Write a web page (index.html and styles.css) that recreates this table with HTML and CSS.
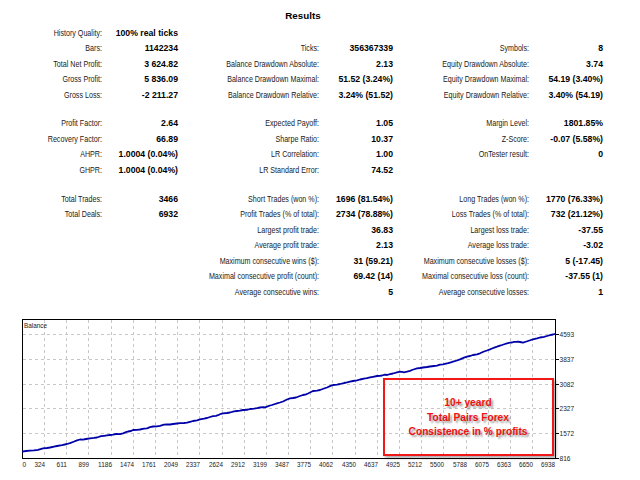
FILE: index.html
```html
<!DOCTYPE html>
<html>
<head>
<meta charset="utf-8">
<title>Results</title>
<link rel="stylesheet" href="styles.css">
</head>
<body>
<div class="report">
  <div class="title">Results</div>
  <div class="stats">
    <div class="l">History Quality:</div><div class="v">100% real ticks</div><div class="l"></div><div class="v"></div><div class="l"></div><div class="v"></div>
    <div class="l">Bars:</div><div class="v">1142234</div><div class="l">Ticks:</div><div class="v">356367339</div><div class="l">Symbols:</div><div class="v">8</div>
    <div class="l">Total Net Profit:</div><div class="v">3 624.82</div><div class="l">Balance Drawdown Absolute:</div><div class="v">2.13</div><div class="l">Equity Drawdown Absolute:</div><div class="v">3.74</div>
    <div class="l">Gross Profit:</div><div class="v">5 836.09</div><div class="l">Balance Drawdown Maximal:</div><div class="v">51.52 (3.24%)</div><div class="l">Equity Drawdown Maximal:</div><div class="v">54.19 (3.40%)</div>
    <div class="l">Gross Loss:</div><div class="v">-2 211.27</div><div class="l">Balance Drawdown Relative:</div><div class="v">3.24% (51.52)</div><div class="l">Equity Drawdown Relative:</div><div class="v">3.40% (54.19)</div>
    <div class="sp"></div>
    <div class="l">Profit Factor:</div><div class="v">2.64</div><div class="l">Expected Payoff:</div><div class="v">1.05</div><div class="l">Margin Level:</div><div class="v">1801.85%</div>
    <div class="l">Recovery Factor:</div><div class="v">66.89</div><div class="l">Sharpe Ratio:</div><div class="v">10.37</div><div class="l">Z-Score:</div><div class="v">-0.07 (5.58%)</div>
    <div class="l">AHPR:</div><div class="v">1.0004 (0.04%)</div><div class="l">LR Correlation:</div><div class="v">1.00</div><div class="l">OnTester result:</div><div class="v">0</div>
    <div class="l">GHPR:</div><div class="v">1.0004 (0.04%)</div><div class="l">LR Standard Error:</div><div class="v">74.52</div><div class="l"></div><div class="v"></div>
    <div class="sp"></div>
    <div class="l">Total Trades:</div><div class="v">3466</div><div class="l">Short Trades (won %):</div><div class="v">1696 (81.54%)</div><div class="l">Long Trades (won %):</div><div class="v">1770 (76.33%)</div>
    <div class="l">Total Deals:</div><div class="v">6932</div><div class="l">Profit Trades (% of total):</div><div class="v">2734 (78.88%)</div><div class="l">Loss Trades (% of total):</div><div class="v">732 (21.12%)</div>
    <div class="l"></div><div class="v"></div><div class="l">Largest profit trade:</div><div class="v">36.83</div><div class="l">Largest loss trade:</div><div class="v">-37.55</div>
    <div class="l"></div><div class="v"></div><div class="l">Average profit trade:</div><div class="v">2.13</div><div class="l">Average loss trade:</div><div class="v">-3.02</div>
    <div class="l"></div><div class="v"></div><div class="l">Maximum consecutive wins ($):</div><div class="v">31 (59.21)</div><div class="l">Maximum consecutive losses ($):</div><div class="v">5 (-17.45)</div>
    <div class="l"></div><div class="v"></div><div class="l">Maximal consecutive profit (count):</div><div class="v">69.42 (14)</div><div class="l">Maximal consecutive loss (count):</div><div class="v">-37.55 (1)</div>
    <div class="l"></div><div class="v"></div><div class="l">Average consecutive wins:</div><div class="v">5</div><div class="l">Average consecutive losses:</div><div class="v">1</div>
  </div>

  <div class="chart">
    <svg class="plot" width="640" height="170" viewBox="0 310 640 170" xmlns="http://www.w3.org/2000/svg">
      <rect x="22.5" y="319.5" width="533" height="139" fill="#fff" stroke="none"/>
      <path class="grid" d="M23 334.5H555M23 359.5H555M23 384.5H555M23 408.5H555M23 433.5H555
        M44.5 320V458M66.5 320V458M88.5 320V458M111.5 320V458M133.5 320V458M155.5 320V458M177.5 320V458M199.5 320V458M222.5 320V458M244.5 320V458M266.5 320V458M288.5 320V458M310.5 320V458M332.5 320V458M355.5 320V458M377.5 320V458M399.5 320V458M421.5 320V458M443.5 320V458M466.5 320V458M488.5 320V458M510.5 320V458M532.5 320V458"/>
      <rect x="22.5" y="319.5" width="533" height="139" fill="none" stroke="#000" stroke-width="1"/>
      <path class="ticks" d="M556 334.5H559M556 359.5H559M556 384.5H559M556 408.5H559M556 433.5H559M556 458.5H559"/>
      <polyline class="bal" points="22,451.7 26,451 30,450.6 34,450.3 38,449.8 43,448.3 47,448 50,447.5 54,446.6 57,446 62,445.2 67,444 70,443.2 73,442 77,440.3 80,439.5 83,439.6 86,439 90,438.3 94,437.9 97,437.5 101,436.2 104,435.8 107,435.4 110,435 113,434.6 116,434 120,434.2 123,433.3 126,432.2 128,431.5 131,431 133,430 137,429.8 140,429.5 144,428.6 147,428.3 150,427.2 153,426.5 157,426.3 160,425.8 164,424.7 167,424.3 170,424.5 173,424 177,423.5 180,423.2 184,423 187,422.7 190,421.8 193,421 197,420.3 200,419.3 204,418.6 207,418 210,417 213,416.2 216,415.8 218,415.2 221,413.8 223,413.3 227,413 230,412.5 234,411.4 237,411 240,410.7 243,410 247,409.8 250,409 254,408.7 257,408.2 260,407.5 263,407.2 265,407.4 267,406.7 270,405.5 272,405 275,404 277,403.3 280,402.5 283,401.5 287,399.5 290,398.3 293,398 296,397.5 300,396 303,395 306,394.3 308,393.5 311,392 313,391 317,390.6 320,390 324,388.5 327,387.5 330,386.2 333,385 337,384.6 340,384 344,383 347,382.4 350,381.6 353,381 357,380.4 360,379.5 364,378.6 367,378.2 370,377.4 373,376.8 377,376 380,375.8 382,375.5 385,374.6 387,375 390,374.2 393,373.5 397,372.4 400,371.7 402,371.9 404,372.3 407,371.7 410,370.8 412,370 415,369 417,368.3 420,368 423,367.5 427,367 430,366.5 434,366 437,365.7 440,364.6 443,364.3 446,363.6 448,363.2 451,362.3 453,361.7 457,360.5 460,359.4 464,357.6 467,356.7 470,356 473,355 477,354.4 480,353.3 484,351.5 487,350.5 490,349.4 492,348.5 495,347.3 497,346.7 500,345.6 502,345 505,344 507,343.3 510,342.7 512,342.5 514,341.9 516,341.8 518,341.6 520,342 523,342.7 525,342 528,341 531,340 533,339.3 537,338.4 540,337.5 544,336.8 547,336 550,335.2 553,334.5 555,333.8"/>
      <text class="ax" x="24" y="328" textLength="23" lengthAdjust="spacingAndGlyphs">Balance</text>
      <g class="ax">
        <text x="559.5" y="337" textLength="14.5" lengthAdjust="spacingAndGlyphs">4593</text>
        <text x="559.5" y="362" textLength="14.5" lengthAdjust="spacingAndGlyphs">3837</text>
        <text x="559.5" y="387" textLength="14.5" lengthAdjust="spacingAndGlyphs">3082</text>
        <text x="559.5" y="411" textLength="14.5" lengthAdjust="spacingAndGlyphs">2327</text>
        <text x="559.5" y="436" textLength="14.5" lengthAdjust="spacingAndGlyphs">1572</text>
        <text x="559.5" y="461" textLength="11" lengthAdjust="spacingAndGlyphs">816</text>
      </g>
      <g class="ax xl">
        <text x="22.5" y="467" class="st" textLength="3.6" lengthAdjust="spacingAndGlyphs">0</text>
        <text x="45" y="467" textLength="10.5" lengthAdjust="spacingAndGlyphs">324</text>
        <text x="67" y="467" textLength="10.5" lengthAdjust="spacingAndGlyphs">611</text>
        <text x="89" y="467" textLength="10.5" lengthAdjust="spacingAndGlyphs">899</text>
        <text x="112" y="467" textLength="14" lengthAdjust="spacingAndGlyphs">1186</text>
        <text x="134" y="467" textLength="14" lengthAdjust="spacingAndGlyphs">1474</text>
        <text x="156" y="467" textLength="14" lengthAdjust="spacingAndGlyphs">1761</text>
        <text x="178" y="467" textLength="14" lengthAdjust="spacingAndGlyphs">2049</text>
        <text x="200" y="467" textLength="14" lengthAdjust="spacingAndGlyphs">2337</text>
        <text x="223" y="467" textLength="14" lengthAdjust="spacingAndGlyphs">2624</text>
        <text x="245" y="467" textLength="14" lengthAdjust="spacingAndGlyphs">2912</text>
        <text x="267" y="467" textLength="14" lengthAdjust="spacingAndGlyphs">3199</text>
        <text x="289" y="467" textLength="14" lengthAdjust="spacingAndGlyphs">3487</text>
        <text x="311" y="467" textLength="14" lengthAdjust="spacingAndGlyphs">3775</text>
        <text x="333" y="467" textLength="14" lengthAdjust="spacingAndGlyphs">4062</text>
        <text x="356" y="467" textLength="14" lengthAdjust="spacingAndGlyphs">4350</text>
        <text x="378" y="467" textLength="14" lengthAdjust="spacingAndGlyphs">4637</text>
        <text x="400" y="467" textLength="14" lengthAdjust="spacingAndGlyphs">4925</text>
        <text x="422" y="467" textLength="14" lengthAdjust="spacingAndGlyphs">5212</text>
        <text x="444" y="467" textLength="14" lengthAdjust="spacingAndGlyphs">5500</text>
        <text x="467" y="467" textLength="14" lengthAdjust="spacingAndGlyphs">5788</text>
        <text x="489" y="467" textLength="14" lengthAdjust="spacingAndGlyphs">6075</text>
        <text x="511" y="467" textLength="14" lengthAdjust="spacingAndGlyphs">6363</text>
        <text x="533" y="467" textLength="14" lengthAdjust="spacingAndGlyphs">6650</text>
        <text x="555" y="467" textLength="14" lengthAdjust="spacingAndGlyphs">6938</text>
      </g>
    </svg>
    <div class="note">
      <div>10+ yeard</div>
      <div>Total Pairs Forex</div>
      <div>Consistence in % profits</div>
    </div>
  </div>
</div>
</body>
</html>
```

FILE: styles.css
```css
html, body {
  margin: 0;
  padding: 0;
  background: #fff;
}

.report {
  width: 640px;
  height: 480px;
  overflow: hidden;
  font-family: "Liberation Sans", Arial, sans-serif;
  color: #000;
}

.title {
  width: 606px;
  padding-top: 8px;
  height: 16px;
  line-height: 16px;
  text-align: center;
  font-weight: bold;
  font-size: 9.8px;
}

.stats {
  margin-top: 1.5px;
  display: grid;
  grid-template-columns: 102px 76px 141px 74px 136px 74px;
}

.stats .l,
.stats .v {
  height: 15.5px;
  line-height: 15.5px;
  text-align: right;
  white-space: nowrap;
}

.stats .l {
  font-family: "Liberation Sans", Arial, sans-serif;
  font-size: 8.7px;
  color: #1a1a1a;
  transform: scaleX(0.82);
  transform-origin: right center;
}

.stats .v {
  font-family: "Liberation Sans", Arial, sans-serif;
  font-weight: bold;
  font-size: 8.7px;
}

.stats .sp {
  grid-column: 1 / -1;
  height: 13.25px;
}

.chart {
  position: relative;
  margin-top: 10px;
  height: 170px;
}

.plot {
  display: block;
}

.grid {
  fill: none;
  stroke: #c8c8c8;
  stroke-width: 1;
  stroke-dasharray: 3 3;
}

.ticks {
  fill: none;
  stroke: #000;
  stroke-width: 1;
}

.bal {
  fill: none;
  stroke: #0000a8;
  stroke-width: 1.8;
  stroke-linejoin: round;
}

.ax {
  font-family: "Liberation Sans", Arial, sans-serif;
  font-size: 8px;
  fill: #222;
}

.xl text {
  text-anchor: end;
}

.xl text.st {
  text-anchor: start;
}

.note {
  position: absolute;
  left: 382.5px;
  top: 67.5px;
  width: 171px;
  height: 78px;
  box-sizing: border-box;
  border: 2px solid #f01818;
  box-shadow: 2px 2px 3px rgba(0, 0, 0, 0.35);
  display: flex;
  flex-direction: column;
  justify-content: center;
  align-items: center;
  padding-top: 3px;
  font-family: "Liberation Sans", Arial, sans-serif;
  font-weight: bold;
  font-size: 10.2px;
  line-height: 14.4px;
  color: #f01010;
  text-shadow: 2px 2px 2px rgba(0, 0, 0, 0.4);
}
```
